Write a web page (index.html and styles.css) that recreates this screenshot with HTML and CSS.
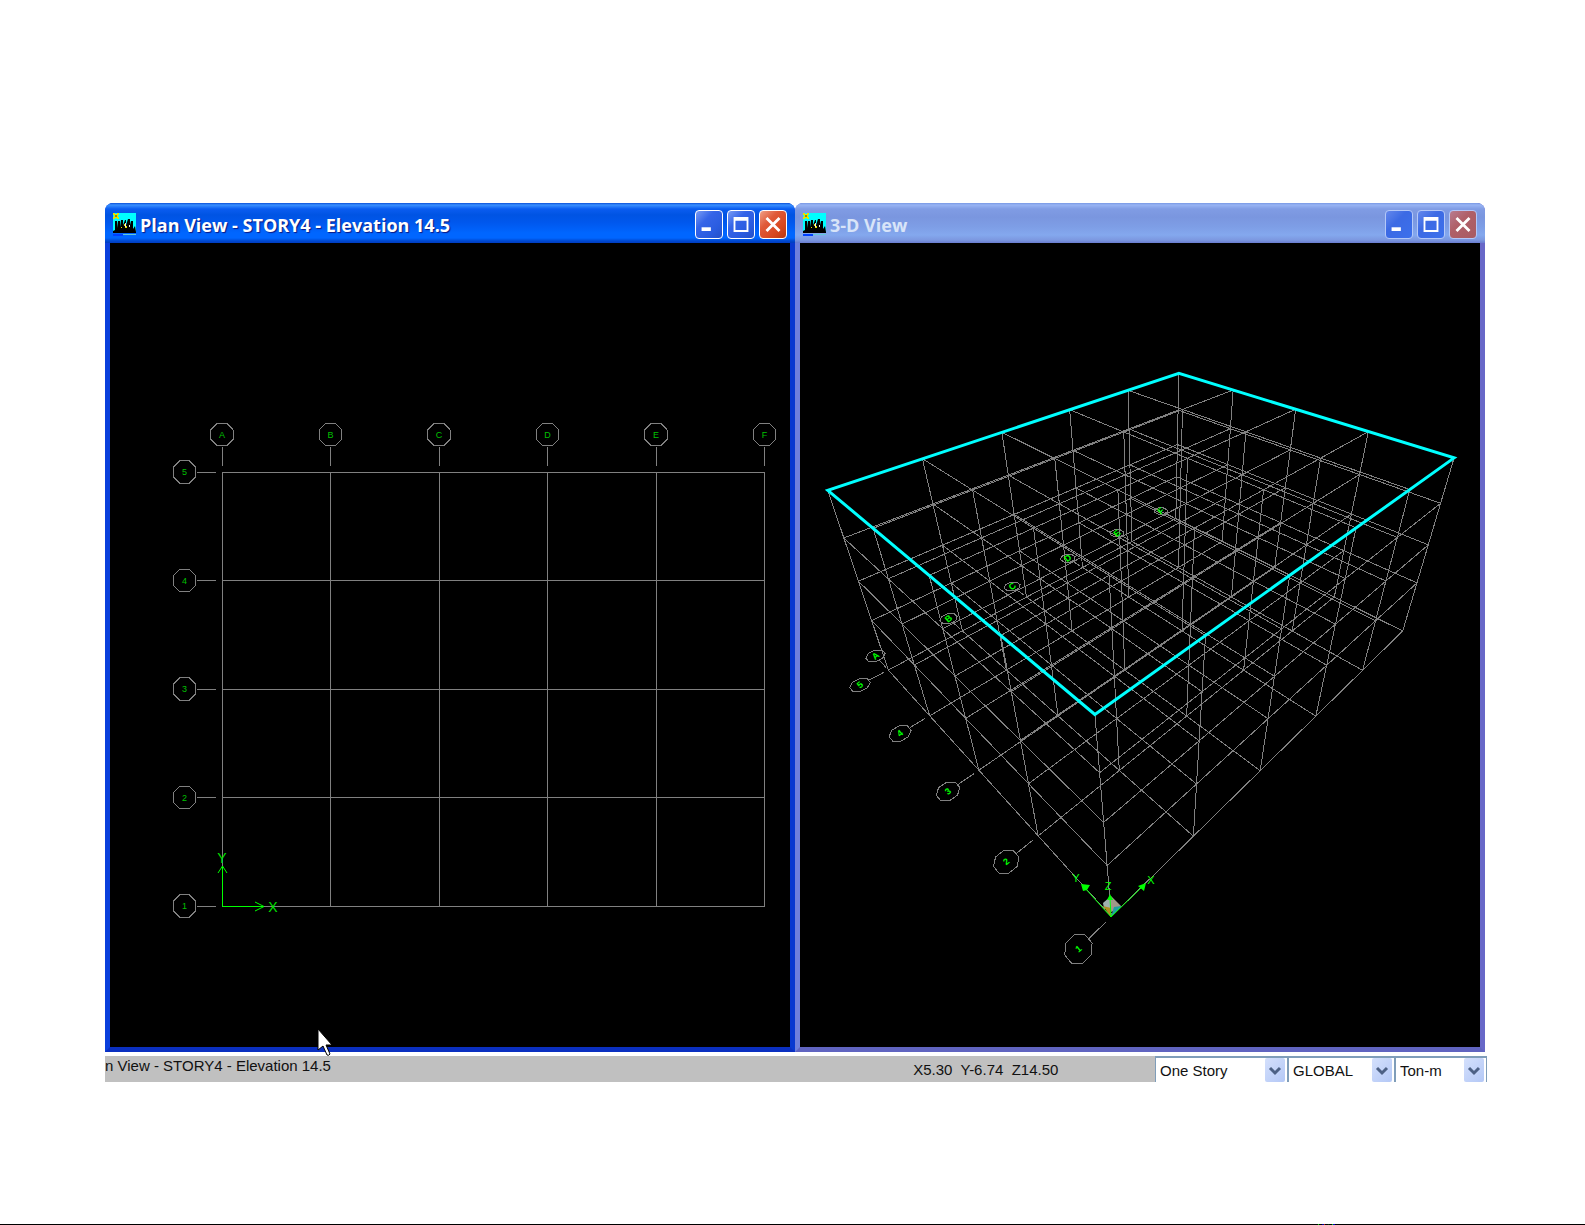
FILE: index.html
```html
<!DOCTYPE html>
<html lang="en">
<head>
  <meta charset="UTF-8">
  <meta name="viewport" content="width=device-width, initial-scale=1.0">
  <title>Plan View - STORY4</title>
  <link rel="stylesheet" href="styles.css">
</head>
<body>
  <svg class="symbols" aria-hidden="true">
    <symbol id="app-icon" viewBox="0 0 23 23">
      <rect width="23" height="20" fill="#00ffff"/>
      <path d="M0 0h2v1h2V0h2v2H5v2h1v2H4V5H2v1H0V4h1V2H0z" fill="#e8e000"/>
      <circle cx="3" cy="3" r="1" fill="#807000"/>
      <path d="M0 20v-2l2-1V8h2v7l1-7h2v6l1-7h2v5l2-5h1v5l2-6h2v6l1-4h2v8l2-3 1 6v1z" fill="#000"/>
      <path d="M11 11h2v2h-2zM13 13h1v2h-2v-1zM8 14h1v1H8z" fill="#e8e000"/>
      <path d="M12 10h1v4h-1zM16 12h1v2h-1z" fill="#eee"/>
      <path d="M0 21h10v2H0z" fill="#0040ff"/>
      <path d="M10 21h13v1H10z" fill="#60c8d8"/>
    </symbol>
    <symbol id="minimize" viewBox="0 0 28 28"><path d="M6 17h10v4H6z" fill="#fff"/></symbol>
    <symbol id="maximize" viewBox="0 0 28 28"><path d="M6 6h16v16H6zM8 10v10h12V10z" fill="#fff" fill-rule="evenodd"/></symbol>
    <symbol id="close" viewBox="0 0 28 28"><path d="M7 7l14 14M21 7L7 21" stroke="#fff" stroke-width="3"/></symbol>
    <symbol id="chevron" viewBox="0 0 20 24"><path d="M5 10l5 5 5-5" fill="none" stroke="#4d6185" stroke-width="3"/></symbol>
  </svg>

  <main class="desktop">
    <div class="windows">
      <section class="window">
        <header class="titlebar">
          <svg class="app-icon"><use href="#app-icon"/></svg>
          <h2>Plan View - STORY4 - Elevation 14.5</h2>
          <button class="btn" aria-label="Minimize"><svg><use href="#minimize"/></svg></button>
          <button class="btn" aria-label="Maximize"><svg><use href="#maximize"/></svg></button>
          <button class="btn btn-close" aria-label="Close"><svg><use href="#close"/></svg></button>
        </header>
        <svg class="view" id="plan" viewBox="110 243 680 804"></svg>
      </section>
      <section class="window inactive">
        <header class="titlebar">
          <svg class="app-icon"><use href="#app-icon"/></svg>
          <h2>3-D View</h2>
          <button class="btn" aria-label="Minimize"><svg><use href="#minimize"/></svg></button>
          <button class="btn" aria-label="Maximize"><svg><use href="#maximize"/></svg></button>
          <button class="btn btn-close" aria-label="Close"><svg><use href="#close"/></svg></button>
        </header>
        <svg class="view" id="space" viewBox="800 243 680 804"></svg>
      </section>
    </div>

    <footer class="statusbar">
      <p class="status-view">n View - STORY4 - Elevation 14.5</p>
      <p class="status-coords">X5.30&nbsp; Y-6.74&nbsp; Z14.50</p>
      <div class="combo combo-story">
        <select aria-label="Story mode"><option>One Story</option></select>
        <svg><use href="#chevron"/></svg>
      </div>
      <div class="combo combo-system">
        <select aria-label="Coordinate system"><option>GLOBAL</option></select>
        <svg><use href="#chevron"/></svg>
      </div>
      <div class="combo combo-units">
        <select aria-label="Units"><option>Ton-m</option></select>
        <svg><use href="#chevron"/></svg>
      </div>
    </footer>
  </main>
  <div class="page-edge"><span></span></div>

  <script src="script.js"></script>
</body>
</html>
```
FILE: styles.css
```css
* {
  box-sizing: border-box;
}
body {
  margin: 0;
  min-height: 100vh;
  display: flex;
  flex-direction: column;
  background: #fff;
  font-family: "Liberation Sans", Arial, sans-serif;
}
.symbols {
  display: none;
}
.desktop {
  flex: 1;
  padding: 203px 100px 0 105px;
}
.windows {
  display: grid;
  grid-template-columns: 1fr 1fr;
  position: relative;
  z-index: 1;
}

/* windows */
.window {
  border: 5px solid #0a3fdc;
  border-color: #0a3fdc #0838d0 #0a2fc0 #0a3fdc;
  border-top: 0;
  border-radius: 8px 8px 0 0;
  background: #0a3fdc;
}
.titlebar {
  display: flex;
  align-items: center;
  gap: 4px;
  height: 40px;
  margin: 0 -5px;
  padding: 3px 8px 0 8px;
  border-radius: 8px 8px 0 0;
  background: linear-gradient(#0a50d8 0, #3a90ff 2px, #0a5cf0 6px, #0054e3 12px, #0058ee 20px, #0066ff 30px, #0066ff 35px, #0048d0 38px, #003cc0 40px);
}
.titlebar h2 {
  flex: 1;
  margin: 0;
  color: #fff;
  font: bold 18px/24px "Open Sans", sans-serif;
  text-shadow: 1px 1px 1px #0a1883;
}
.app-icon {
  width: 23px;
  height: 23px;
}
.btn {
  width: 28px;
  height: 29px;
  padding: 0;
  border: 1px solid #fff;
  border-radius: 4px;
  background: linear-gradient(135deg, #7a9cf4, #3564e8 35%, #2a5ce0 70%, #2450c8);
}
.btn svg {
  display: block;
  width: 100%;
  height: 100%;
}
.btn-close {
  background: linear-gradient(135deg, #f0a088, #e05a38 35%, #d84820 70%, #b83810);
}
.inactive {
  border-color: #7080dc #6868c8 #6064c0 #7080dc;
  background: #7080dc;
}
.inactive .titlebar {
  background: linear-gradient(#7898e4 0, #98b4f4 2px, #809ce4 6px, #7a96df 14px, #7e9ee6 24px, #84a8ee 32px, #7c98e0 37px, #6a7cd0 40px);
}
.inactive h2 {
  color: #d8e4f8;
  text-shadow: none;
}
.inactive .btn {
  border-color: #b4c8f8;
  background: linear-gradient(135deg, #6488ec, #3c6ae4 40%, #3c70ec);
}
.inactive .btn-close {
  background: linear-gradient(135deg, #b87c90, #b06068 40%, #a85c64);
}

/* drawings */
.view {
  display: block;
  width: 100%;
  height: auto;
  background: #000;
  overflow: visible;
}
.grid {
  fill: none;
  stroke: #808080;
  shape-rendering: crispEdges;
}
.outline {
  fill: none;
  stroke: #00ffff;
  stroke-width: 3;
}
.axis {
  fill: none;
  stroke: #00ff00;
}
.axis-head {
  fill: #00ff00;
}
.view text {
  fill: #00c000;
  font: 9px "Liberation Sans", Arial, sans-serif;
  text-anchor: middle;
  dominant-baseline: central;
}
.view .axis-label {
  fill: #00e000;
  font-size: 14px;
}
.view .small-label {
  fill: #00ff00;
  font-size: 9px;
  font-weight: bold;
}
.view .axis-label-small {
  fill: #00ff00;
  font-size: 11px;
}

/* status bar */
.statusbar {
  display: flex;
  height: 26px;
  margin: 4px -2px 0 0;
  background: #c0c0c0;
  color: #111;
  font-size: 15px;
  line-height: 20px;
}
.statusbar p {
  margin: 0;
}
.status-view {
  flex: 809;
}
.status-coords {
  flex: 242;
  padding-top: 4px;
}
.combo {
  position: relative;
  border: 1px solid #7f9db9;
  border-width: 2px 1px 0 1px;
  background: #fff;
}
.combo-story {
  width: 133px;
}
.combo-system {
  width: 107px;
}
.combo-units {
  width: 92px;
}
.combo select {
  width: 100%;
  height: 24px;
  padding: 2px 4px 0 4px;
  border: 0;
  appearance: none;
  background: transparent;
  color: #111;
  font: 15px/20px "Liberation Sans", Arial, sans-serif;
}
.combo svg {
  position: absolute;
  top: 0;
  right: 2px;
  width: 20px;
  height: 24px;
  border-radius: 2px;
  background: linear-gradient(135deg, #d4e0fc, #b4c8f6);
  pointer-events: none;
}

/* black rule along the foot of the page */
.page-edge {
  height: 1px;
  padding-left: 1318px;
  background: #000;
}
.page-edge span {
  display: block;
  width: 17px;
  height: 1px;
  background: linear-gradient(90deg, #00e000 1px, #000 1px 4px, #0000a0 4px 6px, #c02000 6px 7px, #000 7px 10px, #004000 10px 11px, #000 11px 14px, #00e000 14px 15px, #0000c0 15px 17px);
}
```
FILE: script.js
```js
const COLS = ['A', 'B', 'C', 'D', 'E', 'F'];
const ROWS = ['1', '2', '3', '4', '5'];
const NX = COLS.length - 1;
const NY = ROWS.length - 1;
const LEVELS = [0, 4.6, 7.9, 11.2, 14.5];
const TOP = 14.5;

// Bubble position and leader ends, in bays outside the grid
const BUBBLE = 0.345;
const RADIUS = 0.112;
const LEADER = [0.235, 0.055];

// Plan: straight down, y up
function planPoint(x, y) {
  return [222 + x * 108.5, 906 - y * 108.5];
}

// 3-D: perspective columns for the x, y and z axes
const ORIGIN = [1111.3, 916.7, 1];
const AXES = [
  [1088.1, 72.7, 0.568],
  [187.4, 62.8, 0.462],
  [-312, -395.1, -0.27]
];

function spacePoint(x, y, z = 0) {
  const t = [x / NX, y / NY, z / TOP];
  const [px, py, w] = ORIGIN.map((o, i) => o + t.reduce((sum, k, j) => sum + k * AXES[j][i], 0));
  return [px / w, py / w];
}

function path(points, closed) {
  return 'M' + points.map(p => p.map(v => v.toFixed(1)).join(' ')).join('L') + (closed ? 'z' : '');
}

function gridPath(project, levels) {
  let d = '';
  levels.forEach(z => {
    for (let x = 0; x <= NX; x++) d += path([project(x, 0, z), project(x, NY, z)]);
    for (let y = 0; y <= NY; y++) d += path([project(0, y, z), project(NX, y, z)]);
  });
  return d;
}

function columnPath() {
  let d = '';
  for (let x = 0; x <= NX; x++) {
    for (let y = 0; y <= NY; y++) d += path([spacePoint(x, y, 0), spacePoint(x, y, TOP)]);
  }
  return d;
}

function bubble(project, label, x, y, dx, dy, textClass, angle) {
  const cx = x + dx * BUBBLE;
  const cy = y + dy * BUBBLE;
  const ring = [];
  for (let i = 0; i < 8; i++) {
    const a = (i + 0.5) * Math.PI / 4;
    ring.push(project(cx + RADIUS * Math.cos(a), cy + RADIUS * Math.sin(a)));
  }
  const leader = LEADER.map(k => project(x + dx * k, y + dy * k));
  const [tx, ty] = project(cx, cy);
  return `<path class="grid" d="${path(ring, true)}${path(leader)}"/>
    <text class="${textClass}" transform="translate(${tx.toFixed(1)} ${ty.toFixed(1)}) rotate(${angle})">${label}</text>`;
}

function bubbles(project, textClass, angle) {
  return COLS.map((c, i) => bubble(project, c, i, NY, 0, 1, textClass, angle)).join('') +
    ROWS.map((r, i) => bubble(project, r, 0, i, -1, 0, textClass, angle)).join('');
}

document.getElementById('plan').innerHTML = `
  <path class="grid" d="${gridPath(planPoint, [0])}"/>
  ${bubbles(planPoint, '', 0)}
  <path class="axis" d="M222.5 866V906.5H264M218 873l4.500-7 4.500 7M255 902l9 4.500-9 4.500"/>
  <text class="axis-label" x="222" y="858">Y</text>
  <text class="axis-label" x="273" y="907">X</text>
  <path d="M318 1029v21l5-4 4 9q2 1 3-1l-4-9h6z" fill="#fff" stroke="#000"/>`;

document.getElementById('space').innerHTML = `
  <path class="grid" d="${gridPath(spacePoint, LEVELS)}${columnPath()}"/>
  ${bubbles(spacePoint, 'small-label', -40)}
  <path class="outline" d="${path([spacePoint(0, 0, TOP), spacePoint(NX, 0, TOP), spacePoint(NX, NY, TOP), spacePoint(0, NY, TOP)], true)}"/>
  <path d="M1111 896l-8 7 1 5 7 3z" fill="#a0b0b0"/>
  <path d="M1111 896l10 10-5 4-5 2z" fill="#a09888"/>
  <path d="M1103 906l8 2v9z" fill="#b09020"/>
  <path d="M1121 906l-7 1-3 10 10-10z" fill="#20a0a0"/>
  <path class="axis" d="M1083 886l28 31 34-33M1111 917l-1-19"/>
  <path class="axis-head" d="M1081 884l9 1-3 5-4 1zM1146 883l-8 3 6 5zM1110 894l-3 6h6z"/>
  <text class="axis-label-small" x="1076" y="878">Y</text>
  <text class="axis-label-small" x="1108" y="886">Z</text>
  <text class="axis-label-small" x="1151" y="880">X</text>`;
```
